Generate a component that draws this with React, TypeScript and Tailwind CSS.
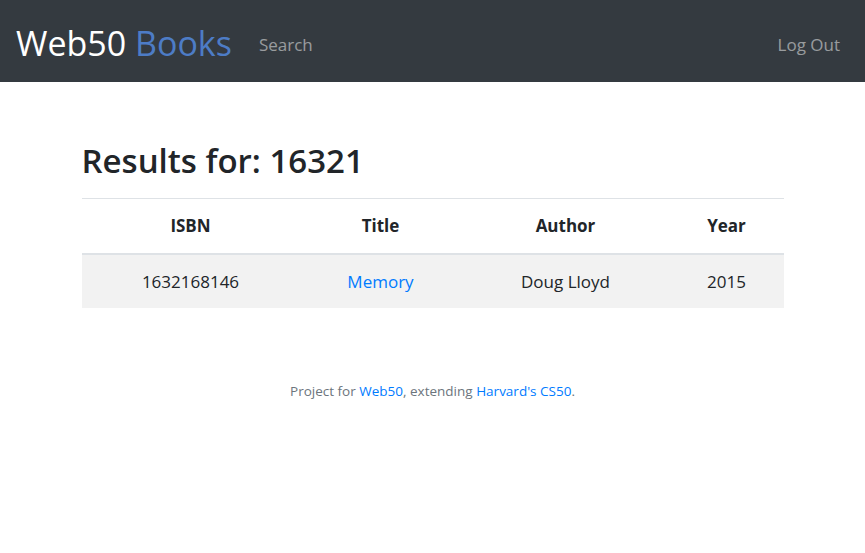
export default function App() {
  const font = { fontFamily: '"Open Sans", "Noto Sans", sans-serif' };
  return (
    <div className="min-h-[553px] bg-white" style={font}>
      <nav className="h-[82px] bg-[#343a40] flex items-center px-4 pt-[4px]">
        <div className="text-[34px] text-white leading-none">
          Web50 <span className="text-[#4d7cc6]">Books</span>
        </div>
        <a className="ml-[27px] mt-[4px] text-[17px] text-white/50">Search</a>
        <a className="ml-auto mr-[9px] mt-[4px] text-[17px] text-white/50">Log Out</a>
      </nav>

      <main className="w-[702px] mx-auto pt-[58px]">
        <h1 className="text-[33px] font-semibold text-[#212529] leading-tight mb-[17px]">
          Results for: 16321
        </h1>
        <table className="w-full table-fixed text-[17px] text-[#212529] border-collapse">
          <thead>
            <tr className="border-t border-[#dee2e6] border-b-2">
              <th className="h-[55px] w-[218px] font-bold">ISBN</th>
              <th className="w-[162px] font-bold">Title</th>
              <th className="w-[208px] font-bold">Author</th>
              <th className="font-bold">Year</th>
            </tr>
          </thead>
          <tbody>
            <tr className="bg-[#f2f2f2]">
              <td className="h-[54px] text-center">1632168146</td>
              <td className="text-center text-[#007bff]">Memory</td>
              <td className="text-center">Doug Lloyd</td>
              <td className="text-center">2015</td>
            </tr>
          </tbody>
        </table>
      </main>

      <footer className="mt-[73px] text-center text-[13.5px] text-[#6c757d]">
        Project for <a className="text-[#007bff]">Web50</a>, extending{" "}
        <a className="text-[#007bff]">Harvard's CS50</a>.
      </footer>
    </div>
  );
}
